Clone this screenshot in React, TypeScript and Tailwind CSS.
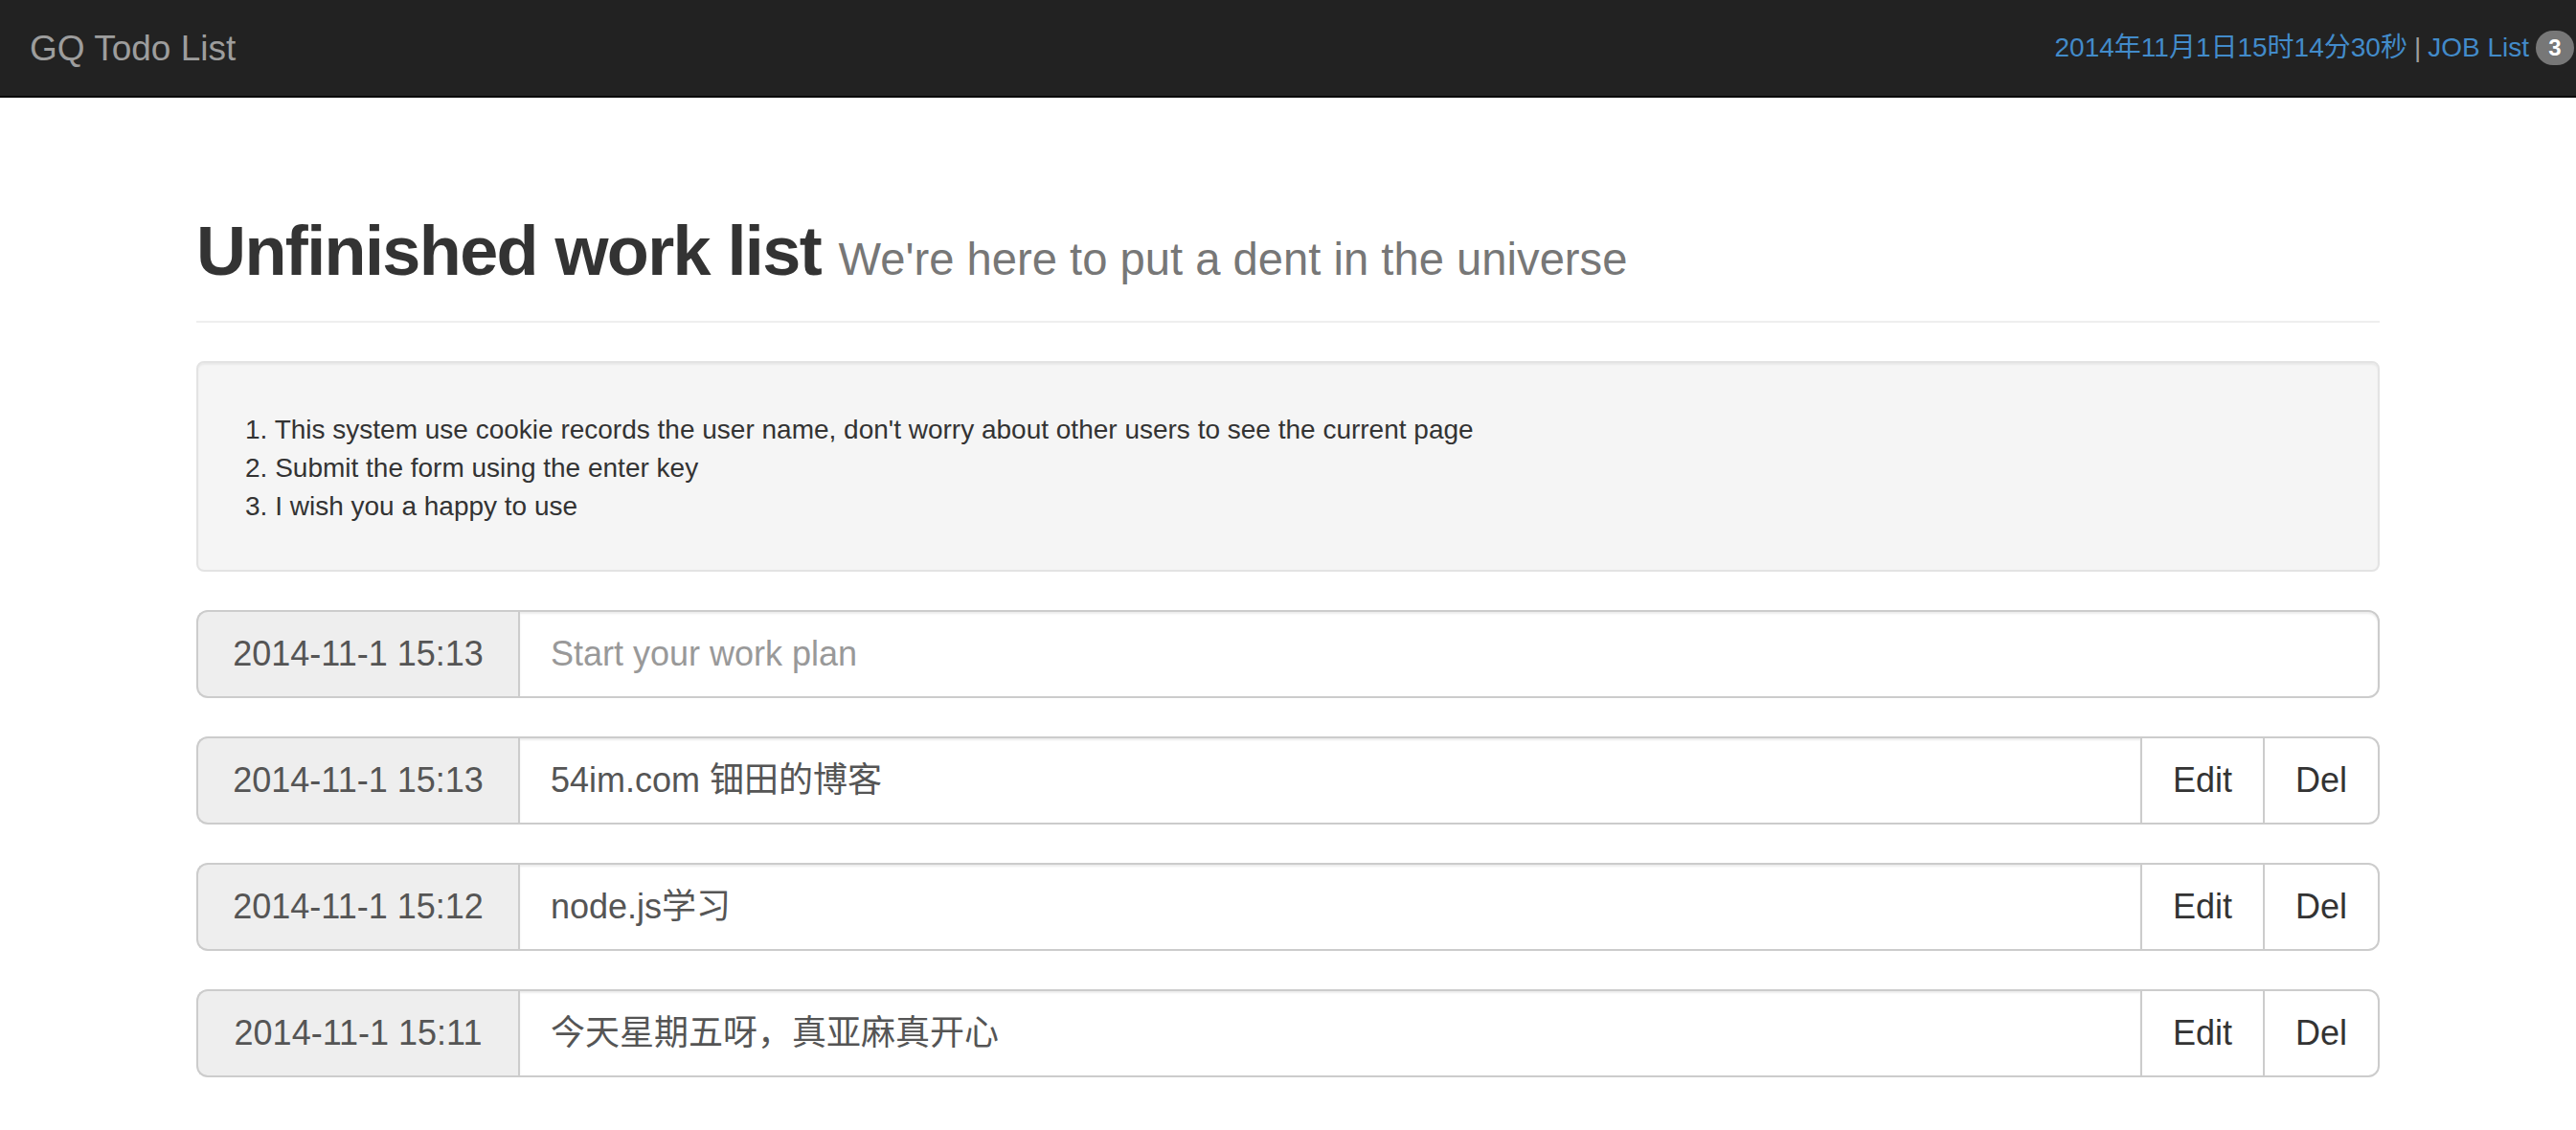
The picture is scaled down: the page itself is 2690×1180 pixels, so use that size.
const todos = [
  { time: "2014-11-1 15:13", text: "54im.com 钿田的博客" },
  { time: "2014-11-1 15:12", text: "node.js学习" },
  { time: "2014-11-1 15:11", text: "今天星期五呀，真亚麻真开心" },
];

const notes = [
  "1. This system use cookie records the user name, don't worry about other users to see the current page",
  "2. Submit the form using the enter key",
  "3. I wish you a happy to use",
];

function TimeAddon({ time }: { time: string }) {
  return (
    <span className="w-[336px] shrink-0 flex items-center justify-center bg-[#eee] border-2 border-r-0 border-[#ccc] rounded-l-[12px] text-[36px] text-[#555]">
      {time}
    </span>
  );
}

export default function App() {
  return (
    <div className="min-h-screen bg-white text-[#333] font-['Liberation_Sans','Noto_Sans_CJK_SC',Arial,sans-serif]">
      {/* Navbar */}
      <nav className="h-[102px] bg-[#222] border-b-2 border-[#080808] flex items-center justify-between pl-[31px] pr-[2px]">
        <span className="text-[37px] text-[#9d9d9d] leading-none">GQ Todo List</span>
        <div className="flex items-center text-[28px] leading-none">
          <span className="text-[#428bca]">2014年11月1日15时14分30秒</span>
          <span className="text-[#9d9d9d] mx-[7px]">|</span>
          <span className="text-[#428bca]">JOB List</span>
          <span className="ml-[7px] w-[40px] h-[36px] rounded-full bg-[#777] text-white text-[24px] font-bold flex items-center justify-center">
            3
          </span>
        </div>
      </nav>

      <div className="w-[2280px] mx-auto">
        {/* Page header */}
        <div className="mt-[121px] pb-[18px] mb-[40px] border-b-2 border-[#eee]">
          <h1 className="text-[72px] leading-[79px] mb-[7px] font-bold tracking-[-1.6px]">
            Unfinished work list{" "}
            <small className="text-[47.2px] font-normal tracking-normal text-[#777]">We're here to put a dent in the universe</small>
          </h1>
        </div>

        {/* Notes */}
        <div className="mb-[40px] bg-[#f5f5f5] border-2 border-[#e3e3e3] rounded-[8px] shadow-[inset_0_2px_2px_rgba(0,0,0,0.05)] px-[38px] pt-[50px] pb-[46px]">
          {notes.map((n) => (
            <div key={n} className="pl-[11px] text-[28px] leading-[40px]">
              {n}
            </div>
          ))}
        </div>

        {/* New item */}
        <div className="flex h-[92px] mb-[40px]">
          <TimeAddon time="2014-11-1 15:13" />
          <input
            className="flex-1 min-w-0 border-2 border-[#ccc] rounded-r-[12px] px-[32px] text-[36px] text-[#555] placeholder:text-[#999] outline-none shadow-[inset_0_2px_2px_rgba(0,0,0,0.075)]"
            placeholder="Start your work plan"
          />
        </div>

        {/* Items */}
        {todos.map((t) => (
          <div key={t.text} className="flex h-[92px] mb-[40px]">
            <TimeAddon time={t.time} />
            <div className="flex-1 flex items-center border-2 border-[#ccc] px-[32px] text-[36px] text-[#555] shadow-[inset_0_2px_2px_rgba(0,0,0,0.075)]">
              {t.text}
            </div>
            <button className="-ml-[2px] border-2 border-[#ccc] bg-white px-[32px] text-[36px] text-[#333]">Edit</button>
            <button className="-ml-[2px] border-2 border-[#ccc] bg-white rounded-r-[12px] px-[32px] text-[36px] text-[#333]">Del</button>
          </div>
        ))}
      </div>
    </div>
  );
}
